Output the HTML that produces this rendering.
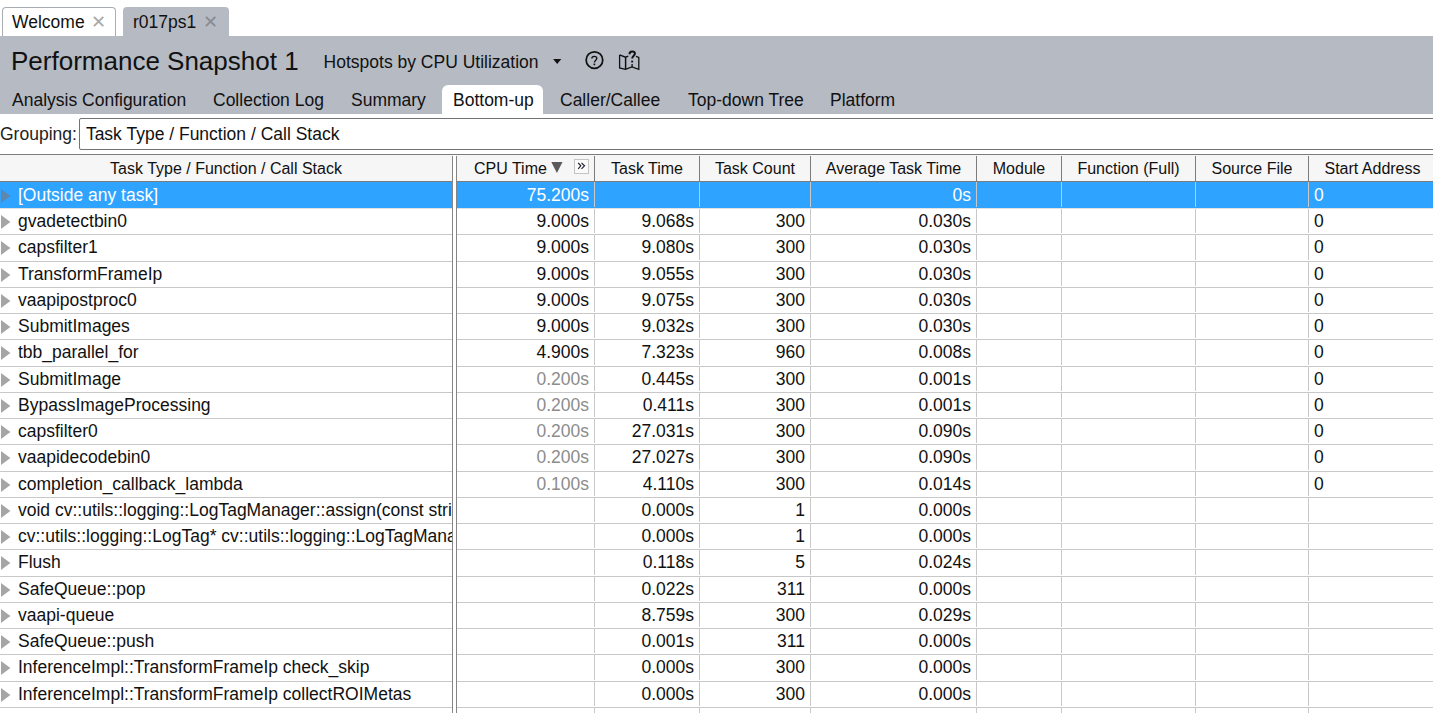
<!DOCTYPE html>
<html><head><meta charset="utf-8">
<style>
html,body{margin:0;padding:0;}
body{width:1433px;height:713px;overflow:hidden;position:relative;background:#fff;font-family:"Liberation Sans",sans-serif;color:#000;}
.abs{position:absolute;white-space:nowrap;}
#topbar{position:absolute;left:0;top:0;width:1433px;height:36px;background:#fff;}
.ftab{position:absolute;top:7px;height:29px;box-sizing:border-box;border-radius:4px 4px 0 0;font-size:17.5px;line-height:28px;}
.ftab .x{position:absolute;color:#a9a9a9;}
#gray{position:absolute;left:0;top:36px;width:1433px;height:78px;background:#b5bac3;}
.title{position:absolute;left:11px;top:45px;font-size:26px;line-height:32px;color:#111;white-space:nowrap;}
.stab{position:absolute;top:86px;height:29px;font-size:17.5px;line-height:29px;color:#111;white-space:nowrap;}
.stab.on{margin-top:-1px;height:30px;background:#fff;border-radius:6px 6px 0 0;}
#grp{position:absolute;left:0;top:114px;width:1433px;height:40px;background:#fff;}
#hline{position:absolute;left:0;top:154px;width:1433px;height:1px;background:#7c7c7c;}
#hdr{position:absolute;left:0;top:155px;width:1433px;height:26px;background:#f6f6f6;}
#hdrb{position:absolute;left:0;top:181px;width:1433px;height:1px;background:#7c7c7c;}
.hcell{position:absolute;top:0;height:26px;line-height:27px;font-size:16px;white-space:nowrap;text-align:center;color:#111;}
.hvl{position:absolute;top:1px;width:1px;height:25px;background:#7c7c7c;}
.row{position:absolute;left:0;width:1433px;height:26px;font-size:17.5px;line-height:26px;color:#111;}
.row.sel{color:#fff;}
.selbg{position:absolute;left:0;width:1433px;background:#2ea3ff;}
.hl{position:absolute;left:0;width:1433px;height:1px;background:#c8c8c8;}
.hl.hls{background:#e2e2e2;}
.row .name{position:absolute;left:18px;top:0;width:434px;overflow:hidden;white-space:nowrap;}
.row .tri{position:absolute;left:0;top:0;fill:#a5a5a5;}
.row.sel .tri{fill:#5f86ad;}
.row .num{position:absolute;top:0;white-space:nowrap;}
.row .dim{color:#8c8c8c;}
.row .addr{position:absolute;left:1314px;top:0;}
#body{position:absolute;left:0;top:0;width:1433px;height:713px;overflow:hidden;}
.vl{position:absolute;width:1px;background:#c8c8c8;}
#dbl1{position:absolute;left:452px;top:156px;width:1px;height:557px;background:#858585;}
#dbl2{position:absolute;left:456px;top:156px;width:1px;height:557px;background:#858585;}
#dblw{position:absolute;left:453px;top:155px;width:3px;height:558px;background:#fff;}
</style></head><body>
<div id="topbar"></div>
<div class="ftab" style="left:2px;width:114px;border:1px solid #a8adb4;border-bottom:none;background:#fff;"><span class="abs" style="left:9px;top:0;color:#111;">Welcome</span><span class="x abs" style="left:88px;top:0;">&#x2715;</span></div>
<div class="ftab" style="left:123px;width:106px;background:#b5bac3;"><span class="abs" style="left:10px;top:1px;color:#111;">r017ps1</span><span class="x abs" style="left:79.6px;top:1px;color:#888c92;">&#x2715;</span></div>
<div id="gray"></div>
<div class="title">Performance Snapshot 1</div>
<div class="abs" style="left:323.6px;top:50px;font-size:17.5px;line-height:24px;color:#111;">Hotspots by CPU Utilization</div>
<svg class="abs" style="left:553px;top:58px" width="10" height="8"><path d="M0.1 1.1 L8.3 1.1 L4.2 6 Z" fill="#111"/></svg>
<svg class="abs" style="left:583px;top:50px" width="22" height="22" viewBox="0 0 22 22"><circle cx="11.45" cy="10.1" r="8.3" fill="none" stroke="#111" stroke-width="1.75"/><path d="M8.8 8.6 C8.8 7 10 6.3 11.3 6.3 C12.8 6.3 13.8 7.1 13.8 8.4 C13.8 10 11.4 10.4 11.4 12.4" fill="none" stroke="#111" stroke-width="1.35"/><rect x="10.5" y="13.6" width="1.7" height="1.6" fill="#111"/></svg>
<svg class="abs" style="left:614px;top:47px" width="30" height="26" viewBox="0 0 30 26"><path d="M5.6 7.9 L5.6 20.9 L11.5 22.3 L17.9 20 L24.8 22.3 L24.8 10.5 L22 9.4 M14.3 9.2 L11.5 10.2 L5.6 7.9" fill="none" stroke="#111" stroke-width="1.3" stroke-linejoin="miter"/><line x1="11.6" y1="10.2" x2="11.6" y2="22.2" stroke="#111" stroke-width="1.5"/><path d="M15.5 7.2 C15.5 5.4 16.7 4.6 18.2 4.6 C19.8 4.6 20.9 5.4 20.9 6.8 C20.9 8.7 18.2 9 18.2 11.6" fill="none" stroke="#111" stroke-width="2"/><rect x="17.2" y="13.6" width="1.9" height="1.9" fill="#111"/><line x1="18.1" y1="17" x2="18.1" y2="20" stroke="#111" stroke-width="1.3"/></svg>
<div class="stab" style="left:0px;padding:0 12px;">Analysis Configuration</div>
<div class="stab" style="left:201px;padding:0 12px;">Collection Log</div>
<div class="stab" style="left:339px;padding:0 12px;">Summary</div>
<div class="stab on" style="left:442px;width:101px;"><span class="abs" style="left:11px;top:1px">Bottom-up</span></div>
<div class="stab" style="left:548px;padding:0 12px;">Caller/Callee</div>
<div class="stab" style="left:676px;padding:0 12px;">Top-down Tree</div>
<div class="stab" style="left:818px;padding:0 12px;">Platform</div>
<div id="grp">
 <div class="abs" style="left:0px;top:5px;font-size:17.5px;line-height:30px;color:#222;">Grouping:</div>
 <div class="abs" style="left:79px;top:4px;width:1400px;height:32px;box-sizing:border-box;border:1px solid #727272;border-radius:2px;background:#fff;"><span class="abs" style="left:5.9px;top:1px;font-size:17.5px;line-height:29px;color:#111;">Task Type / Function / Call Stack</span></div>
</div>
<div id="hline"></div>
<div id="hdr">
 <div class="hcell" style="left:0;width:452px;">Task Type / Function / Call Stack</div>
 <div class="hcell" style="left:457px;width:137px;"><span class="abs" style="left:17px;top:0;">CPU Time</span></div>
 <svg class="abs" style="left:551px;top:7px" width="12" height="11" viewBox="0 0 12 11"><path d="M0.3 0 L11.5 0 L5.9 11 Z" fill="#5a5a5a"/></svg>
 <div class="abs" style="left:574px;top:4px;width:15px;height:15px;box-sizing:border-box;border:1px solid #c4c4c4;background:#fafafa;"></div>
 <svg class="abs" style="left:577px;top:7px" width="10" height="9" viewBox="0 0 10 9"><path d="M1.2 0.8 L3.8 3.8 L1.2 6.8 M4.5 0.8 L7.5 3.8 L4.5 6.8" fill="none" stroke="#223" stroke-width="1.2"/></svg>
 <div class="hcell" style="left:595px;width:104px;">Task Time</div>
 <div class="hcell" style="left:700px;width:110px;">Task Count</div>
 <div class="hcell" style="left:811px;width:165px;">Average Task Time</div>
 <div class="hcell" style="left:977px;width:84px;">Module</div>
 <div class="hcell" style="left:1062px;width:133px;">Function (Full)</div>
 <div class="hcell" style="left:1196px;width:112px;">Source File</div>
 <div class="hcell" style="left:1310.5px;width:124px;">Start Address</div>
 <div class="hvl" style="left:594px"></div><div class="hvl" style="left:699px"></div><div class="hvl" style="left:810px"></div><div class="hvl" style="left:976px"></div><div class="hvl" style="left:1061px"></div><div class="hvl" style="left:1195px"></div><div class="hvl" style="left:1308px"></div>
</div>
<div id="hdrb"></div>
<div id="body">
<div class="selbg" style="top:182px;height:26px"></div><div class="hl hls" style="top:208px"></div><div class="vl" style="left:594px;top:182px;height:25px"></div><div class="vl" style="left:699px;top:182px;height:25px"></div><div class="vl" style="left:810px;top:182px;height:25px"></div><div class="vl" style="left:976px;top:182px;height:25px"></div><div class="vl" style="left:1061px;top:182px;height:25px"></div><div class="vl" style="left:1195px;top:182px;height:25px"></div><div class="vl" style="left:1308px;top:182px;height:25px"></div><div class="row sel" style="top:182px"><svg class="tri" width="12" height="26" viewBox="0 0 12 26"><path d="M1 7 L10.4 14 L1 21 Z"/></svg><div class="name">[Outside any task]</div><div class="num" style="right:844px">75.200s</div><div class="num" style="right:739px"></div><div class="num" style="right:628px"></div><div class="num" style="right:462px">0s</div><div class="addr">0</div></div><div class="hl" style="top:234px"></div><div class="vl" style="left:594px;top:209px;height:24px"></div><div class="vl" style="left:699px;top:209px;height:24px"></div><div class="vl" style="left:810px;top:209px;height:24px"></div><div class="vl" style="left:976px;top:209px;height:24px"></div><div class="vl" style="left:1061px;top:209px;height:24px"></div><div class="vl" style="left:1195px;top:209px;height:24px"></div><div class="vl" style="left:1308px;top:209px;height:24px"></div><div class="row" style="top:208px"><svg class="tri" width="12" height="26" viewBox="0 0 12 26"><path d="M1 7 L10.4 14 L1 21 Z"/></svg><div class="name">gvadetectbin0</div><div class="num" style="right:844px">9.000s</div><div class="num" style="right:739px">9.068s</div><div class="num" style="right:628px">300</div><div class="num" style="right:462px">0.030s</div><div class="addr">0</div></div><div class="hl" style="top:261px"></div><div class="vl" style="left:594px;top:235px;height:25px"></div><div class="vl" style="left:699px;top:235px;height:25px"></div><div class="vl" style="left:810px;top:235px;height:25px"></div><div class="vl" style="left:976px;top:235px;height:25px"></div><div class="vl" style="left:1061px;top:235px;height:25px"></div><div class="vl" style="left:1195px;top:235px;height:25px"></div><div class="vl" style="left:1308px;top:235px;height:25px"></div><div class="row" style="top:234px"><svg class="tri" width="12" height="26" viewBox="0 0 12 26"><path d="M1 7 L10.4 14 L1 21 Z"/></svg><div class="name">capsfilter1</div><div class="num" style="right:844px">9.000s</div><div class="num" style="right:739px">9.080s</div><div class="num" style="right:628px">300</div><div class="num" style="right:462px">0.030s</div><div class="addr">0</div></div><div class="hl" style="top:287px"></div><div class="vl" style="left:594px;top:262px;height:24px"></div><div class="vl" style="left:699px;top:262px;height:24px"></div><div class="vl" style="left:810px;top:262px;height:24px"></div><div class="vl" style="left:976px;top:262px;height:24px"></div><div class="vl" style="left:1061px;top:262px;height:24px"></div><div class="vl" style="left:1195px;top:262px;height:24px"></div><div class="vl" style="left:1308px;top:262px;height:24px"></div><div class="row" style="top:261px"><svg class="tri" width="12" height="26" viewBox="0 0 12 26"><path d="M1 7 L10.4 14 L1 21 Z"/></svg><div class="name">TransformFrameIp</div><div class="num" style="right:844px">9.000s</div><div class="num" style="right:739px">9.055s</div><div class="num" style="right:628px">300</div><div class="num" style="right:462px">0.030s</div><div class="addr">0</div></div><div class="hl" style="top:313px"></div><div class="vl" style="left:594px;top:288px;height:24px"></div><div class="vl" style="left:699px;top:288px;height:24px"></div><div class="vl" style="left:810px;top:288px;height:24px"></div><div class="vl" style="left:976px;top:288px;height:24px"></div><div class="vl" style="left:1061px;top:288px;height:24px"></div><div class="vl" style="left:1195px;top:288px;height:24px"></div><div class="vl" style="left:1308px;top:288px;height:24px"></div><div class="row" style="top:287px"><svg class="tri" width="12" height="26" viewBox="0 0 12 26"><path d="M1 7 L10.4 14 L1 21 Z"/></svg><div class="name">vaapipostproc0</div><div class="num" style="right:844px">9.000s</div><div class="num" style="right:739px">9.075s</div><div class="num" style="right:628px">300</div><div class="num" style="right:462px">0.030s</div><div class="addr">0</div></div><div class="hl" style="top:339px"></div><div class="vl" style="left:594px;top:314px;height:24px"></div><div class="vl" style="left:699px;top:314px;height:24px"></div><div class="vl" style="left:810px;top:314px;height:24px"></div><div class="vl" style="left:976px;top:314px;height:24px"></div><div class="vl" style="left:1061px;top:314px;height:24px"></div><div class="vl" style="left:1195px;top:314px;height:24px"></div><div class="vl" style="left:1308px;top:314px;height:24px"></div><div class="row" style="top:313px"><svg class="tri" width="12" height="26" viewBox="0 0 12 26"><path d="M1 7 L10.4 14 L1 21 Z"/></svg><div class="name">SubmitImages</div><div class="num" style="right:844px">9.000s</div><div class="num" style="right:739px">9.032s</div><div class="num" style="right:628px">300</div><div class="num" style="right:462px">0.030s</div><div class="addr">0</div></div><div class="hl" style="top:366px"></div><div class="vl" style="left:594px;top:340px;height:25px"></div><div class="vl" style="left:699px;top:340px;height:25px"></div><div class="vl" style="left:810px;top:340px;height:25px"></div><div class="vl" style="left:976px;top:340px;height:25px"></div><div class="vl" style="left:1061px;top:340px;height:25px"></div><div class="vl" style="left:1195px;top:340px;height:25px"></div><div class="vl" style="left:1308px;top:340px;height:25px"></div><div class="row" style="top:339px"><svg class="tri" width="12" height="26" viewBox="0 0 12 26"><path d="M1 7 L10.4 14 L1 21 Z"/></svg><div class="name">tbb_parallel_for</div><div class="num" style="right:844px">4.900s</div><div class="num" style="right:739px">7.323s</div><div class="num" style="right:628px">960</div><div class="num" style="right:462px">0.008s</div><div class="addr">0</div></div><div class="hl" style="top:392px"></div><div class="vl" style="left:594px;top:367px;height:24px"></div><div class="vl" style="left:699px;top:367px;height:24px"></div><div class="vl" style="left:810px;top:367px;height:24px"></div><div class="vl" style="left:976px;top:367px;height:24px"></div><div class="vl" style="left:1061px;top:367px;height:24px"></div><div class="vl" style="left:1195px;top:367px;height:24px"></div><div class="vl" style="left:1308px;top:367px;height:24px"></div><div class="row" style="top:366px"><svg class="tri" width="12" height="26" viewBox="0 0 12 26"><path d="M1 7 L10.4 14 L1 21 Z"/></svg><div class="name">SubmitImage</div><div class="num dim" style="right:844px">0.200s</div><div class="num" style="right:739px">0.445s</div><div class="num" style="right:628px">300</div><div class="num" style="right:462px">0.001s</div><div class="addr">0</div></div><div class="hl" style="top:418px"></div><div class="vl" style="left:594px;top:393px;height:24px"></div><div class="vl" style="left:699px;top:393px;height:24px"></div><div class="vl" style="left:810px;top:393px;height:24px"></div><div class="vl" style="left:976px;top:393px;height:24px"></div><div class="vl" style="left:1061px;top:393px;height:24px"></div><div class="vl" style="left:1195px;top:393px;height:24px"></div><div class="vl" style="left:1308px;top:393px;height:24px"></div><div class="row" style="top:392px"><svg class="tri" width="12" height="26" viewBox="0 0 12 26"><path d="M1 7 L10.4 14 L1 21 Z"/></svg><div class="name">BypassImageProcessing</div><div class="num dim" style="right:844px">0.200s</div><div class="num" style="right:739px">0.411s</div><div class="num" style="right:628px">300</div><div class="num" style="right:462px">0.001s</div><div class="addr">0</div></div><div class="hl" style="top:444px"></div><div class="vl" style="left:594px;top:419px;height:24px"></div><div class="vl" style="left:699px;top:419px;height:24px"></div><div class="vl" style="left:810px;top:419px;height:24px"></div><div class="vl" style="left:976px;top:419px;height:24px"></div><div class="vl" style="left:1061px;top:419px;height:24px"></div><div class="vl" style="left:1195px;top:419px;height:24px"></div><div class="vl" style="left:1308px;top:419px;height:24px"></div><div class="row" style="top:418px"><svg class="tri" width="12" height="26" viewBox="0 0 12 26"><path d="M1 7 L10.4 14 L1 21 Z"/></svg><div class="name">capsfilter0</div><div class="num dim" style="right:844px">0.200s</div><div class="num" style="right:739px">27.031s</div><div class="num" style="right:628px">300</div><div class="num" style="right:462px">0.090s</div><div class="addr">0</div></div><div class="hl" style="top:471px"></div><div class="vl" style="left:594px;top:445px;height:25px"></div><div class="vl" style="left:699px;top:445px;height:25px"></div><div class="vl" style="left:810px;top:445px;height:25px"></div><div class="vl" style="left:976px;top:445px;height:25px"></div><div class="vl" style="left:1061px;top:445px;height:25px"></div><div class="vl" style="left:1195px;top:445px;height:25px"></div><div class="vl" style="left:1308px;top:445px;height:25px"></div><div class="row" style="top:444px"><svg class="tri" width="12" height="26" viewBox="0 0 12 26"><path d="M1 7 L10.4 14 L1 21 Z"/></svg><div class="name">vaapidecodebin0</div><div class="num dim" style="right:844px">0.200s</div><div class="num" style="right:739px">27.027s</div><div class="num" style="right:628px">300</div><div class="num" style="right:462px">0.090s</div><div class="addr">0</div></div><div class="hl" style="top:497px"></div><div class="vl" style="left:594px;top:472px;height:24px"></div><div class="vl" style="left:699px;top:472px;height:24px"></div><div class="vl" style="left:810px;top:472px;height:24px"></div><div class="vl" style="left:976px;top:472px;height:24px"></div><div class="vl" style="left:1061px;top:472px;height:24px"></div><div class="vl" style="left:1195px;top:472px;height:24px"></div><div class="vl" style="left:1308px;top:472px;height:24px"></div><div class="row" style="top:471px"><svg class="tri" width="12" height="26" viewBox="0 0 12 26"><path d="M1 7 L10.4 14 L1 21 Z"/></svg><div class="name">completion_callback_lambda</div><div class="num dim" style="right:844px">0.100s</div><div class="num" style="right:739px">4.110s</div><div class="num" style="right:628px">300</div><div class="num" style="right:462px">0.014s</div><div class="addr">0</div></div><div class="hl" style="top:523px"></div><div class="vl" style="left:594px;top:498px;height:24px"></div><div class="vl" style="left:699px;top:498px;height:24px"></div><div class="vl" style="left:810px;top:498px;height:24px"></div><div class="vl" style="left:976px;top:498px;height:24px"></div><div class="vl" style="left:1061px;top:498px;height:24px"></div><div class="vl" style="left:1195px;top:498px;height:24px"></div><div class="vl" style="left:1308px;top:498px;height:24px"></div><div class="row" style="top:497px"><svg class="tri" width="12" height="26" viewBox="0 0 12 26"><path d="M1 7 L10.4 14 L1 21 Z"/></svg><div class="name">void cv::utils::logging::LogTagManager::assign(const string&amp; name, LogTag* ptr)</div><div class="num" style="right:844px"></div><div class="num" style="right:739px">0.000s</div><div class="num" style="right:628px">1</div><div class="num" style="right:462px">0.000s</div><div class="addr"></div></div><div class="hl" style="top:549px"></div><div class="vl" style="left:594px;top:524px;height:24px"></div><div class="vl" style="left:699px;top:524px;height:24px"></div><div class="vl" style="left:810px;top:524px;height:24px"></div><div class="vl" style="left:976px;top:524px;height:24px"></div><div class="vl" style="left:1061px;top:524px;height:24px"></div><div class="vl" style="left:1195px;top:524px;height:24px"></div><div class="vl" style="left:1308px;top:524px;height:24px"></div><div class="row" style="top:523px"><svg class="tri" width="12" height="26" viewBox="0 0 12 26"><path d="M1 7 L10.4 14 L1 21 Z"/></svg><div class="name">cv::utils::logging::LogTag* cv::utils::logging::LogTagManager::get(const std::string&amp;)</div><div class="num" style="right:844px"></div><div class="num" style="right:739px">0.000s</div><div class="num" style="right:628px">1</div><div class="num" style="right:462px">0.000s</div><div class="addr"></div></div><div class="hl" style="top:576px"></div><div class="vl" style="left:594px;top:550px;height:25px"></div><div class="vl" style="left:699px;top:550px;height:25px"></div><div class="vl" style="left:810px;top:550px;height:25px"></div><div class="vl" style="left:976px;top:550px;height:25px"></div><div class="vl" style="left:1061px;top:550px;height:25px"></div><div class="vl" style="left:1195px;top:550px;height:25px"></div><div class="vl" style="left:1308px;top:550px;height:25px"></div><div class="row" style="top:549px"><svg class="tri" width="12" height="26" viewBox="0 0 12 26"><path d="M1 7 L10.4 14 L1 21 Z"/></svg><div class="name">Flush</div><div class="num" style="right:844px"></div><div class="num" style="right:739px">0.118s</div><div class="num" style="right:628px">5</div><div class="num" style="right:462px">0.024s</div><div class="addr"></div></div><div class="hl" style="top:602px"></div><div class="vl" style="left:594px;top:577px;height:24px"></div><div class="vl" style="left:699px;top:577px;height:24px"></div><div class="vl" style="left:810px;top:577px;height:24px"></div><div class="vl" style="left:976px;top:577px;height:24px"></div><div class="vl" style="left:1061px;top:577px;height:24px"></div><div class="vl" style="left:1195px;top:577px;height:24px"></div><div class="vl" style="left:1308px;top:577px;height:24px"></div><div class="row" style="top:576px"><svg class="tri" width="12" height="26" viewBox="0 0 12 26"><path d="M1 7 L10.4 14 L1 21 Z"/></svg><div class="name">SafeQueue::pop</div><div class="num" style="right:844px"></div><div class="num" style="right:739px">0.022s</div><div class="num" style="right:628px">311</div><div class="num" style="right:462px">0.000s</div><div class="addr"></div></div><div class="hl" style="top:628px"></div><div class="vl" style="left:594px;top:603px;height:24px"></div><div class="vl" style="left:699px;top:603px;height:24px"></div><div class="vl" style="left:810px;top:603px;height:24px"></div><div class="vl" style="left:976px;top:603px;height:24px"></div><div class="vl" style="left:1061px;top:603px;height:24px"></div><div class="vl" style="left:1195px;top:603px;height:24px"></div><div class="vl" style="left:1308px;top:603px;height:24px"></div><div class="row" style="top:602px"><svg class="tri" width="12" height="26" viewBox="0 0 12 26"><path d="M1 7 L10.4 14 L1 21 Z"/></svg><div class="name">vaapi-queue</div><div class="num" style="right:844px"></div><div class="num" style="right:739px">8.759s</div><div class="num" style="right:628px">300</div><div class="num" style="right:462px">0.029s</div><div class="addr"></div></div><div class="hl" style="top:654px"></div><div class="vl" style="left:594px;top:629px;height:24px"></div><div class="vl" style="left:699px;top:629px;height:24px"></div><div class="vl" style="left:810px;top:629px;height:24px"></div><div class="vl" style="left:976px;top:629px;height:24px"></div><div class="vl" style="left:1061px;top:629px;height:24px"></div><div class="vl" style="left:1195px;top:629px;height:24px"></div><div class="vl" style="left:1308px;top:629px;height:24px"></div><div class="row" style="top:628px"><svg class="tri" width="12" height="26" viewBox="0 0 12 26"><path d="M1 7 L10.4 14 L1 21 Z"/></svg><div class="name">SafeQueue::push</div><div class="num" style="right:844px"></div><div class="num" style="right:739px">0.001s</div><div class="num" style="right:628px">311</div><div class="num" style="right:462px">0.000s</div><div class="addr"></div></div><div class="hl" style="top:681px"></div><div class="vl" style="left:594px;top:655px;height:25px"></div><div class="vl" style="left:699px;top:655px;height:25px"></div><div class="vl" style="left:810px;top:655px;height:25px"></div><div class="vl" style="left:976px;top:655px;height:25px"></div><div class="vl" style="left:1061px;top:655px;height:25px"></div><div class="vl" style="left:1195px;top:655px;height:25px"></div><div class="vl" style="left:1308px;top:655px;height:25px"></div><div class="row" style="top:654px"><svg class="tri" width="12" height="26" viewBox="0 0 12 26"><path d="M1 7 L10.4 14 L1 21 Z"/></svg><div class="name">InferenceImpl::TransformFrameIp check_skip</div><div class="num" style="right:844px"></div><div class="num" style="right:739px">0.000s</div><div class="num" style="right:628px">300</div><div class="num" style="right:462px">0.000s</div><div class="addr"></div></div><div class="hl" style="top:707px"></div><div class="vl" style="left:594px;top:682px;height:24px"></div><div class="vl" style="left:699px;top:682px;height:24px"></div><div class="vl" style="left:810px;top:682px;height:24px"></div><div class="vl" style="left:976px;top:682px;height:24px"></div><div class="vl" style="left:1061px;top:682px;height:24px"></div><div class="vl" style="left:1195px;top:682px;height:24px"></div><div class="vl" style="left:1308px;top:682px;height:24px"></div><div class="row" style="top:681px"><svg class="tri" width="12" height="26" viewBox="0 0 12 26"><path d="M1 7 L10.4 14 L1 21 Z"/></svg><div class="name">InferenceImpl::TransformFrameIp collectROIMetas</div><div class="num" style="right:844px"></div><div class="num" style="right:739px">0.000s</div><div class="num" style="right:628px">300</div><div class="num" style="right:462px">0.000s</div><div class="addr"></div></div><div class="hl" style="top:733px"></div><div class="vl" style="left:594px;top:708px;height:24px"></div><div class="vl" style="left:699px;top:708px;height:24px"></div><div class="vl" style="left:810px;top:708px;height:24px"></div><div class="vl" style="left:976px;top:708px;height:24px"></div><div class="vl" style="left:1061px;top:708px;height:24px"></div><div class="vl" style="left:1195px;top:708px;height:24px"></div><div class="vl" style="left:1308px;top:708px;height:24px"></div><div class="row" style="top:707px"><svg class="tri" width="12" height="26" viewBox="0 0 12 26"><path d="M1 7 L10.4 14 L1 21 Z"/></svg><div class="name"></div><div class="num" style="right:844px"></div><div class="num" style="right:739px"></div><div class="num" style="right:628px"></div><div class="num" style="right:462px"></div><div class="addr"></div></div>

</div>
<div id="dblw"></div><div id="dbl1"></div><div id="dbl2"></div>
</body></html>
